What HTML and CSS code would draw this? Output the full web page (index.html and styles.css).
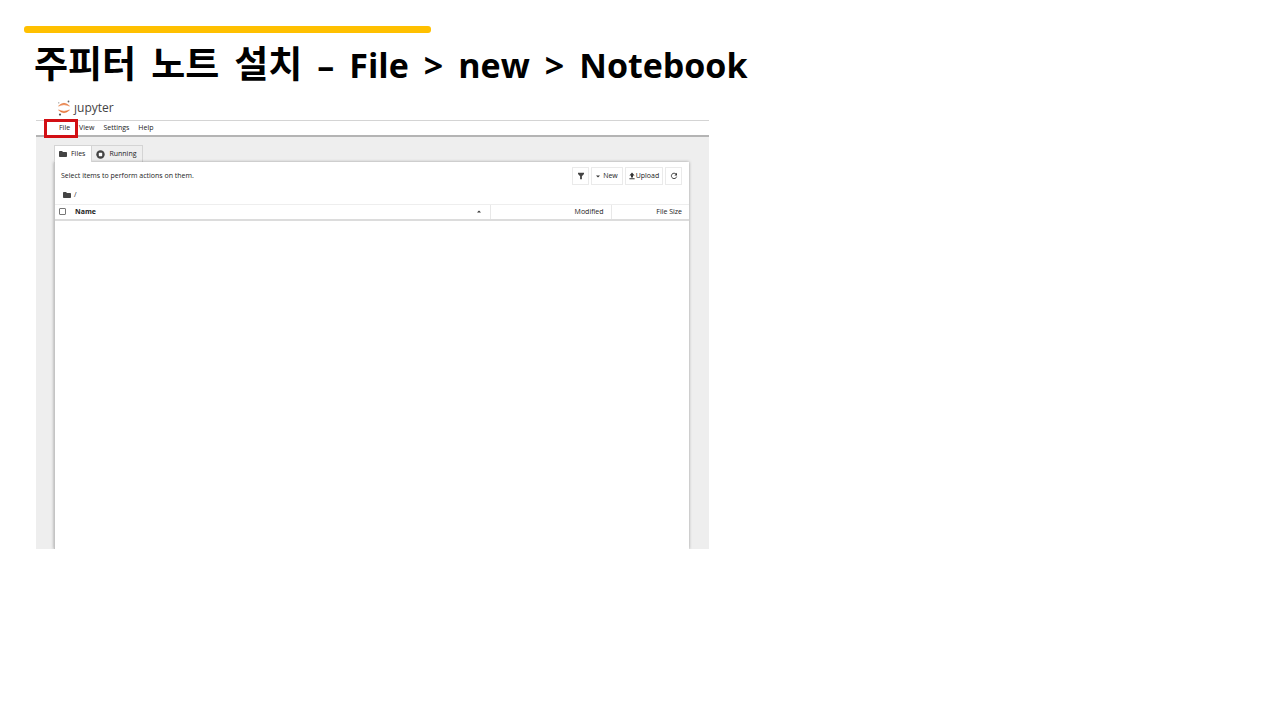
FILE: index.html
```html
<!DOCTYPE html>
<html lang="ko">
<head>
    <meta charset="UTF-8">
    <meta name="viewport" content="width=device-width, initial-scale=1.0">
    <title>주피터 노트 설치</title>
    <link rel="stylesheet" href="styles.css">
</head>
<body>
    <main class="slide">
        <div class="accent-bar"></div>
        <h1 class="title">
            <span class="ko">주피터</span>
            <span class="ko">노트</span>
            <span class="ko">설치</span>
            <span>–</span>
            <span>File</span>
            <span>&gt;</span>
            <span>new</span>
            <span>&gt;</span>
            <span>Notebook</span>
        </h1>

        <section class="jupyter">
            <header class="logo">
                <svg class="logo-mark" viewBox="0 0 14 16" aria-hidden="true">
                    <path d="M1.5 6 Q7 0.6 12.5 6 Q7 3.2 1.5 6Z" fill="#e46e2e" stroke="#e46e2e" stroke-width="0.5"/>
                    <path d="M1.5 10 Q7 15.4 12.5 10 Q7 12.8 1.5 10Z" fill="#e46e2e" stroke="#e46e2e" stroke-width="0.5"/>
                    <circle cx="11.5" cy="1.5" r="0.9" fill="#666"/>
                    <circle cx="1.8" cy="2.8" r="0.6" fill="#777"/>
                    <circle cx="3" cy="14.6" r="1.1" fill="#555"/>
                </svg>
                <span>ȷupyter</span>
            </header>

            <nav class="menu">
                <button class="menu-item marked">File</button>
                <button class="menu-item">View</button>
                <button class="menu-item">Settings</button>
                <button class="menu-item">Help</button>
            </nav>

            <div class="workspace">
                <div class="tabs">
                    <button class="tab active">
                        <svg class="icon-folder" viewBox="0 0 8 6" aria-hidden="true"><path d="M0 0.8 Q0 0 0.8 0H3L4 1H7.2Q8 1 8 1.8V5.2Q8 6 7.2 6H0.8Q0 6 0 5.2Z" fill="#444"/></svg>
                        Files
                    </button>
                    <button class="tab">
                        <svg class="icon-running" viewBox="0 0 9 9" aria-hidden="true"><circle cx="4.5" cy="4.5" r="4.2" fill="#444"/><rect x="2.8" y="2.8" width="3.4" height="3.4" rx="0.6" fill="#fff"/></svg>
                        Running
                    </button>
                </div>

                <div class="panel">
                    <div class="toolbar">
                        <p class="hint">Select items to perform actions on them.</p>
                        <button class="tool" aria-label="Filter">
                            <svg class="icon-tool" viewBox="0 0 8 8" aria-hidden="true"><path d="M1 0.8H7V2L4.9 4.2V7.2H3.1V4.2L1 2Z" fill="#444"/></svg>
                        </button>
                        <button class="tool new">
                            <svg class="icon-caret" viewBox="0 0 4 3" aria-hidden="true"><path d="M0 0.4H4L2 2.6Z" fill="#333"/></svg>
                            New
                        </button>
                        <button class="tool upload">
                            <svg class="icon-upload" viewBox="0 0 6 8" aria-hidden="true"><path d="M3 0.6L5.6 3.6H4V5.4H2V3.6H0.4ZM0.4 6.2H5.6V7.2H0.4Z" fill="#333"/></svg>
                            Upload
                        </button>
                        <button class="tool" aria-label="Refresh">
                            <svg class="icon-tool" viewBox="0 0 8 8" aria-hidden="true"><path d="M6.2 2.2A2.7 2.7 0 1 0 6.7 4.6" fill="none" stroke="#333" stroke-width="0.9"/><path d="M7 0.8V3.4H4.4Z" fill="#333"/></svg>
                        </button>
                    </div>

                    <div class="path">
                        <svg class="icon-folder" viewBox="0 0 8 6" aria-hidden="true"><path d="M0 0.8 Q0 0 0.8 0H3L4 1H7.2Q8 1 8 1.8V5.2Q8 6 7.2 6H0.8Q0 6 0 5.2Z" fill="#444"/></svg>
                        <span>/</span>
                    </div>

                    <table class="files">
                        <thead>
                            <tr>
                                <th class="col-check"><input type="checkbox" class="check" aria-label="Name"></th>
                                <th class="col-name">
                                    <div class="name-cell">
                                        Name
                                        <svg class="icon-caret" viewBox="0 0 4 3" aria-hidden="true"><path d="M0 2.6H4L2 0.4Z" fill="#333"/></svg>
                                    </div>
                                </th>
                                <th class="col-modified">Modified</th>
                                <th class="col-size">File Size</th>
                            </tr>
                        </thead>
                    </table>
                </div>
            </div>
        </section>
    </main>
</body>
</html>
```

FILE: styles.css
```css
*, *::after {
    box-sizing: border-box;
}
body {
    margin: 0;
    background-color: #fff;
    color: #222;
    font-family: "Open Sans", "Noto Sans CJK KR", sans-serif;
}
button {
    margin: 0;
    border: none;
    background: none;
    color: inherit;
    font-family: inherit;
    font-size: 7px;
    line-height: 10px;
    cursor: pointer;
}
svg {
    display: block;
    flex: none;
}
.slide {
    padding: 26px 24px;
}
.accent-bar {
    width: 33%;
    height: 7px;
    border-radius: 3px;
    background-color: #ffc000;
}
.title {
    display: flex;
    flex-wrap: wrap;
    align-items: baseline;
    gap: 0 15px;
    margin: 5px 0 0 10px;
    color: #000;
    font-size: 34px;
    line-height: 48px;
    font-weight: bold;
}
.ko {
    font-family: "Noto Sans CJK KR", sans-serif;
    font-size: 37px;
}
.jupyter {
    max-width: 673px;
    margin: 11px 0 0 12px;
}
.logo {
    display: flex;
    align-items: flex-start;
    gap: 3px;
    height: 20px;
    padding-left: 21px;
    color: #444;
    font-size: 12px;
    line-height: 16px;
}
.logo-mark {
    width: 14px;
    height: 16px;
}
.menu {
    display: flex;
    height: 17px;
    padding-left: 18px;
    border-top: 1px solid #d4d4d4;
    border-bottom: 2px solid #b4b4b4;
}
.menu-item {
    position: relative;
    padding: 0 4px 0 5px;
}
/* red frame round the menu to open */
.marked::after {
    content: "";
    position: absolute;
    top: -2px;
    left: -10px;
    width: 34px;
    height: 19px;
    border: 3px solid #d20f14;
}
.workspace {
    padding: 8px 20px 0 18px;
    background-color: #eee;
}
.tabs {
    display: flex;
}
.tab {
    display: flex;
    align-items: center;
    gap: 4px;
    height: 17px;
    padding: 0 6px 0 4px;
    border: 1px solid #d4d4d4;
    border-bottom: none;
    border-left-width: 0;
}
.tab.active {
    position: relative;
    z-index: 1;
    border-left-width: 1px;
    background-color: #fff;
}
.icon-folder {
    width: 8px;
    height: 6px;
}
.icon-running {
    width: 9px;
    height: 9px;
}
.panel {
    min-height: 387px;
    border-left: 1px solid #c4c4c4;
    background-color: #fff;
    box-shadow: 0 0 3px rgba(0, 0, 0, 0.35);
    clip-path: inset(-3px -3px 0 -3px);
}
.toolbar {
    display: flex;
    align-items: center;
    gap: 2px;
    padding: 5px 7px 0 6px;
}
.hint {
    flex: 1;
    margin: 0;
    font-size: 7px;
    line-height: 10px;
}
.tool {
    display: flex;
    align-items: center;
    justify-content: center;
    gap: 3px;
    width: 17px;
    height: 18px;
    padding: 0;
    border: 1px solid #eaeaea;
    background-color: #fff;
}
.tool.new {
    width: 32px;
}
.tool.upload {
    gap: 1px;
    width: 38px;
}
.icon-tool {
    width: 8px;
    height: 8px;
}
.icon-caret {
    width: 4px;
    height: 3px;
}
.icon-upload {
    width: 6px;
    height: 8px;
}
.path {
    display: flex;
    align-items: center;
    gap: 3px;
    height: 19px;
    padding-left: 8px;
    font-size: 7px;
    line-height: 10px;
}
.files {
    width: 100%;
    border-collapse: collapse;
    table-layout: fixed;
    font-size: 7px;
    line-height: 10px;
}
.files th {
    height: 15px;
    padding: 0 7px;
    border-top: 1px solid #eee;
    border-bottom: 2px solid #dcdcdc;
    font-weight: normal;
    text-align: right;
}
.files .col-check {
    width: 20px;
    padding: 0 0 0 4px;
    text-align: left;
}
.files .col-name {
    padding: 0 9px 0 0;
    font-weight: bold;
}
.name-cell {
    display: flex;
    align-items: center;
    justify-content: space-between;
}
.files .col-modified {
    width: 121px;
}
.files .col-size {
    width: 78px;
}
.files .col-modified,
.files .col-size {
    border-left: 1px solid #e8e8e8;
}
.check {
    display: block;
    width: 7px;
    height: 7px;
    margin: 0;
    appearance: none;
    border: 1px solid #777;
    border-radius: 1px;
    background-color: #fff;
}
```
